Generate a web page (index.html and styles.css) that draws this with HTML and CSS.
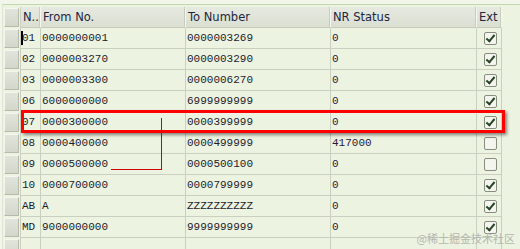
FILE: index.html
```html
<!DOCTYPE html>
<html lang="en">
<head>
  <meta charset="UTF-8" />
  <title>Number Ranges</title>
  <link rel="stylesheet" href="styles.css">
</head>
<body>
  <div class="frame">
    <div class="grid">
      <div class="row head">
        <div class="sel"><span class="btn"></span></div>
        <div class="cell">N..</div>
        <div class="cell">From No.</div>
        <div class="cell">To Number</div>
        <div class="cell">NR Status</div>
        <div class="cell">Ext</div>
      </div>
      <div class="row">
        <div class="sel"><span class="btn"></span></div>
        <div class="cell num"><span class="caret"></span>01</div>
        <div class="cell">0000000001</div>
        <div class="cell">0000003269</div>
        <div class="cell stat">0</div>
        <div class="cell ext"><span class="chk on"></span></div>
      </div>
      <div class="row">
        <div class="sel"><span class="btn"></span></div>
        <div class="cell num">02</div>
        <div class="cell">0000003270</div>
        <div class="cell">0000003290</div>
        <div class="cell stat">0</div>
        <div class="cell ext"><span class="chk on"></span></div>
      </div>
      <div class="row">
        <div class="sel"><span class="btn"></span></div>
        <div class="cell num">03</div>
        <div class="cell">0000003300</div>
        <div class="cell">0000006270</div>
        <div class="cell stat">0</div>
        <div class="cell ext"><span class="chk on"></span></div>
      </div>
      <div class="row">
        <div class="sel"><span class="btn"></span></div>
        <div class="cell num">06</div>
        <div class="cell">6000000000</div>
        <div class="cell">6999999999</div>
        <div class="cell stat">0</div>
        <div class="cell ext"><span class="chk on"></span></div>
      </div>
      <div class="row">
        <div class="sel"><span class="btn"></span></div>
        <div class="cell num">07</div>
        <div class="cell">0000300000</div>
        <div class="cell">0000399999</div>
        <div class="cell stat">0</div>
        <div class="cell ext"><span class="chk on"></span></div>
      </div>
      <div class="row">
        <div class="sel"><span class="btn"></span></div>
        <div class="cell num">08</div>
        <div class="cell">0000400000</div>
        <div class="cell">0000499999</div>
        <div class="cell stat">417000</div>
        <div class="cell ext"><span class="chk"></span></div>
      </div>
      <div class="row">
        <div class="sel"><span class="btn"></span></div>
        <div class="cell num">09</div>
        <div class="cell">0000500000</div>
        <div class="cell">0000500100</div>
        <div class="cell stat">0</div>
        <div class="cell ext"><span class="chk"></span></div>
      </div>
      <div class="row">
        <div class="sel"><span class="btn"></span></div>
        <div class="cell num">10</div>
        <div class="cell">0000700000</div>
        <div class="cell">0000799999</div>
        <div class="cell stat">0</div>
        <div class="cell ext"><span class="chk on"></span></div>
      </div>
      <div class="row">
        <div class="sel"><span class="btn"></span></div>
        <div class="cell num">AB</div>
        <div class="cell">A</div>
        <div class="cell">ZZZZZZZZZZ</div>
        <div class="cell stat">0</div>
        <div class="cell ext"><span class="chk on"></span></div>
      </div>
      <div class="row">
        <div class="sel"><span class="btn"></span></div>
        <div class="cell num">MD</div>
        <div class="cell">9000000000</div>
        <div class="cell">9999999999</div>
        <div class="cell stat">0</div>
        <div class="cell ext"><span class="chk on"></span></div>
      </div>
      <div class="row">
        <div class="sel"><span class="btn"></span></div>
        <div class="cell num"></div>
        <div class="cell"></div>
        <div class="cell"></div>
        <div class="cell stat"></div>
        <div class="cell ext"></div>
      </div>
    </div>

    <!-- annotations drawn over the grid -->
    <div class="mark-box"></div>
    <div class="mark-line"></div>
  </div>

  <div class="watermark">@稀土掘金技术社区</div>
</body>
</html>
```

FILE: styles.css
```css
body {
  margin: 0;
  background-color: #f1f5ea;
  font-family: 'Liberation Mono', monospace;
  font-size: 11px;
  color: #1c1c2c;
  height: 249px;
  overflow: hidden;
  position: relative;
}

.frame {
  position: relative;
  margin: 4px 0 0 2px;
  border-top: 1px solid #c4d8ad;
  border-left: 1px solid #dfe7d2;
  background-color: #edf3e1;
  padding-top: 2px;
  height: 242px;
  overflow: hidden;
}

.row {
  display: grid;
  grid-template-columns: 18px 20px 145px 145px 146px 25px;
  height: 21px;
}

.cell {
  border-right: 1px solid #c9d0bf;
  border-bottom: 1px solid #c9d0bf;
  display: flex;
  align-items: center;
  padding-left: 1px;
  white-space: nowrap;
  overflow: hidden;
  position: relative;
}

.stat {
  color: #2a1a3a;
}

.ext {
  justify-content: center;
  padding-left: 2px;
}

/* Header row */
.head .cell {
  font-family: 'DejaVu Sans', sans-serif;
  font-size: 11.5px;
  color: #1d2640;
  background: linear-gradient(#e6e9e0, #dadfd2);
  border-right: 1px solid #f4f6ef;
  border-bottom: 1px solid #c5ccba;
  box-shadow: inset -1px 0 0 #c7cdbd;
  padding-left: 2px;
}

/* Row selector buttons */
.sel {
  border-right: 1px solid #c9d0bf;
  display: flex;
  padding: 1px;
}

.btn {
  flex: 1;
  background: linear-gradient(#e1e4da, #d3d7cb);
  border-top: 1px solid #f3f5ee;
  border-left: 1px solid #f3f5ee;
  border-right: 1px solid #b5baab;
  border-bottom: 1px solid #b5baab;
}

.caret {
  position: absolute;
  left: 0;
  top: 3px;
  width: 2px;
  height: 14px;
  background-color: #000;
}

/* Checkboxes */
.chk {
  width: 11px;
  height: 11px;
  border: 1px solid #878d7f;
  border-radius: 2px;
  background-color: #f3f5ee;
  position: relative;
}

.chk.on::after {
  content: '';
  position: absolute;
  left: 3px;
  top: 0;
  width: 3px;
  height: 7px;
  border-right: 2px solid #2a4527;
  border-bottom: 2px solid #2a4527;
  transform: rotate(40deg);
}

/* Red annotation marks */
.mark-box {
  position: absolute;
  left: 18px;
  top: 105px;
  width: 478px;
  height: 17px;
  border: 3px solid #ff0000;
  box-shadow: 2px 2px 3px rgba(0, 0, 0, 0.45);
}

.mark-line {
  position: absolute;
  left: 108px;
  top: 113px;
  width: 50px;
  height: 51px;
  border-right: 1px solid #d00000;
  border-bottom: 1px solid #d00000;
}

.watermark {
  position: absolute;
  right: 5px;
  bottom: 3px;
  font-family: 'Noto Sans CJK SC', sans-serif;
  font-size: 11px;
  color: #b4b7b0;
}
```
